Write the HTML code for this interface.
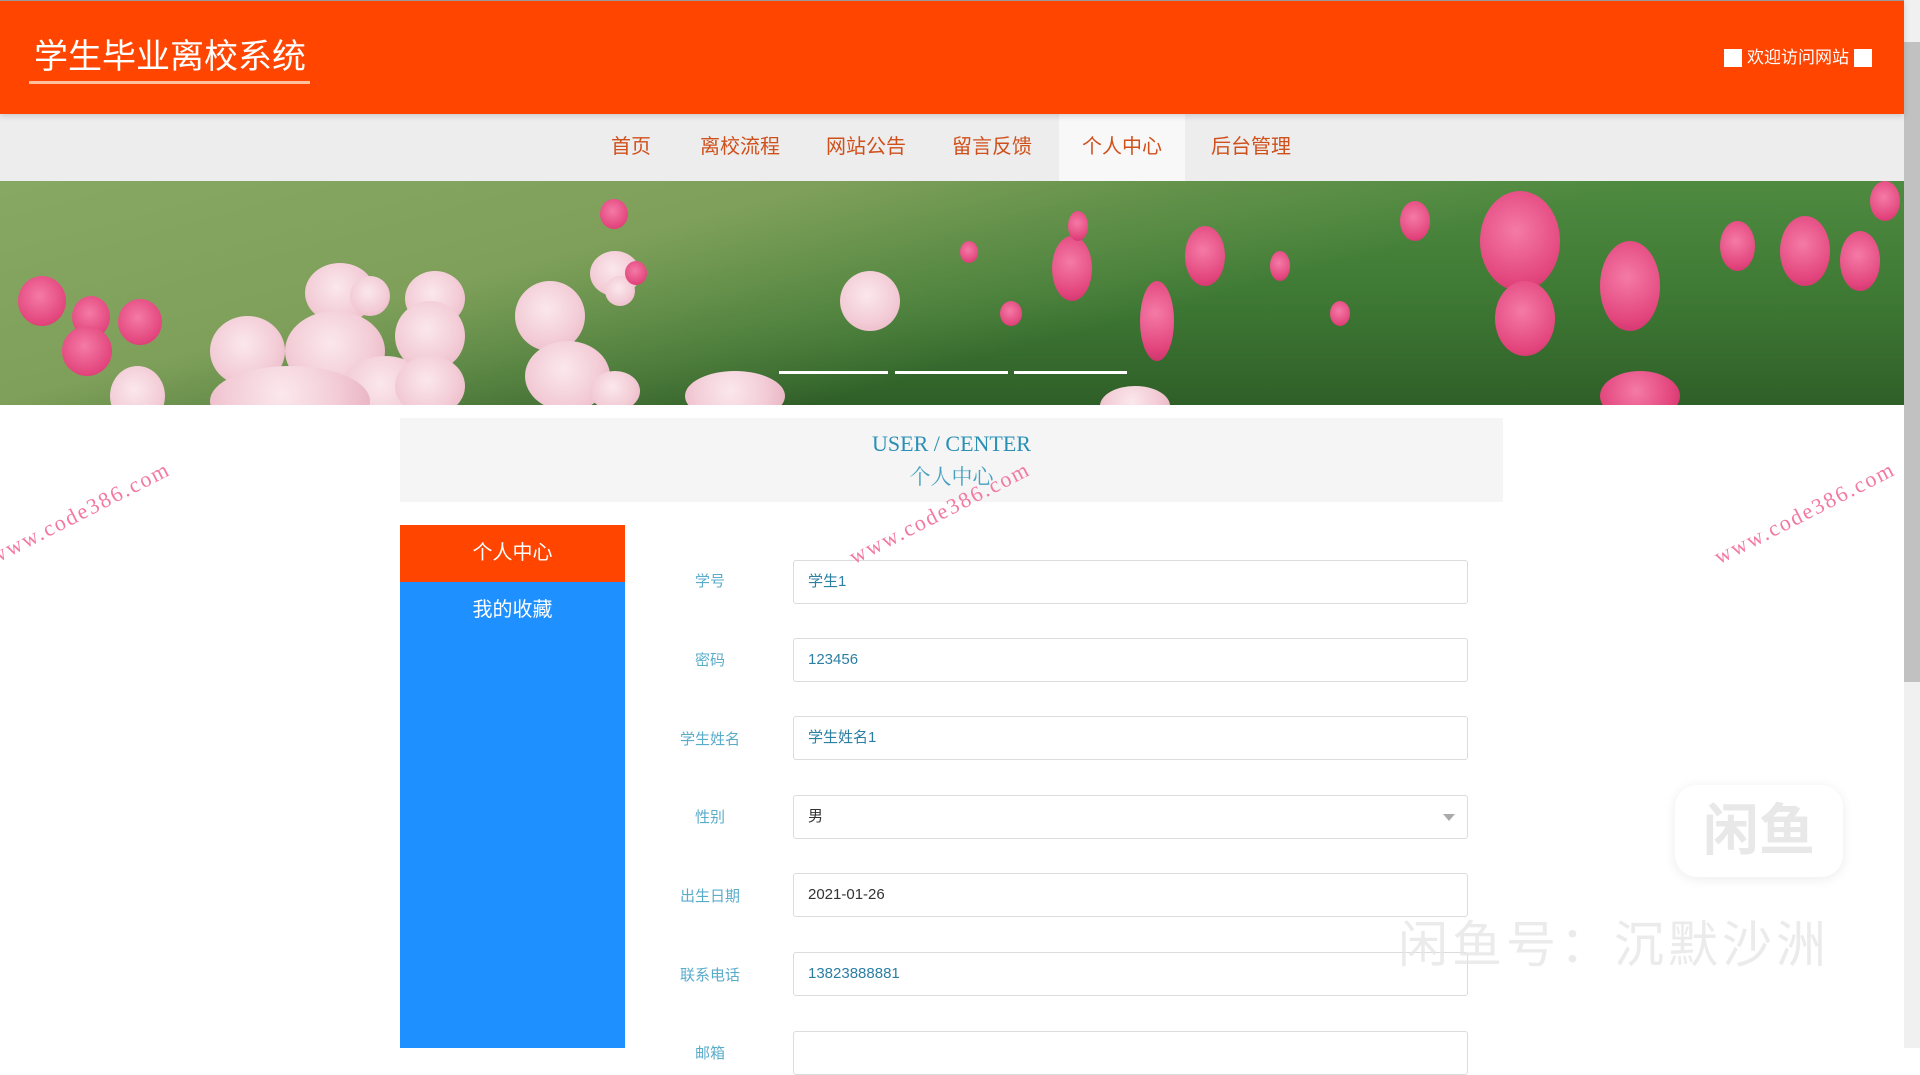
<!DOCTYPE html>
<html><head><meta charset="utf-8">
<style>
*{margin:0;padding:0;box-sizing:border-box}
body{width:1920px;height:1048px;overflow:hidden;background:#fff;font-family:"Liberation Sans","Noto Sans CJK SC",sans-serif;position:relative}
.hdr{position:absolute;left:0;top:0;width:1904px;height:114px;background:#ff4500;border-top:1px solid #999;box-shadow:0 2px 6px rgba(0,0,0,.15);z-index:2}
.title{position:absolute;left:34px;top:36px;font-size:34px;color:#fff;line-height:40px}
.uline{position:absolute;left:29px;top:80px;width:281px;height:3px;background:#ffc0a0}
.welcome{position:absolute;left:1724px;top:46px;font-size:17px;color:#fff;line-height:22px;display:flex;align-items:center;gap:5px}
.sq{width:18px;height:18px;background:#fff;display:inline-block}
.nav{position:absolute;left:0;top:114px;width:1904px;height:67px;background:#ededed}
.nav span{position:absolute;top:0;height:67px;line-height:67px;font-size:20px;color:#d0501c;transform:translateX(-50%)}
.nav .act{background:#f8f8f8;width:126px;text-align:center}
.banner{position:absolute;left:0;top:181px;width:1904px;height:224px;overflow:hidden;
background:
linear-gradient(165deg,#86a862 0%,#7fa05a 30%,rgba(110,150,80,.6) 45%,transparent 60%),
linear-gradient(180deg,#4f8a40 0%,#3f7a35 50%,#2f5f28 100%)}
.banner i{position:absolute;border-radius:50%;display:block}
.p{background:radial-gradient(circle at 45% 40%,#fbe8ec 0%,#f3cdd7 55%,#e7b0c0 100%)}
.h{background:radial-gradient(circle at 45% 40%,#f47aa6 0%,#e2447c 70%,#c8306a 100%)}
.dot{position:absolute;top:190px;height:3px;background:#fff}
.ubox{position:absolute;left:400px;top:418px;width:1103px;height:84px;background:#f5f5f5;text-align:center;font-family:"Liberation Serif","Noto Serif CJK SC",serif;color:#2a8fb5}
.ubox .a{position:absolute;top:13px;left:0;right:0;font-size:22px}
.ubox .b{position:absolute;top:43px;left:0;right:0;font-size:21px;color:#45a0c0}
.side{position:absolute;left:400px;top:525px;width:225px;height:523px;background:#1e90ff}
.side div{height:57px;line-height:57px;text-align:center;color:#fff;font-size:20px}
.side .on{background:#ff4500}
.lbl{position:absolute;left:660px;width:100px;text-align:center;font-size:15px;color:#5aaccb}
.inp{position:absolute;left:793px;width:675px;height:44px;border:1px solid #dcdcdc;border-radius:3px;background:#fff;font-size:15px;color:#2b7fa3;padding-left:14px;line-height:42px}
.wm{position:absolute;color:#f27aa2;font-family:"Liberation Serif",serif;font-size:22px;transform:rotate(-27deg);letter-spacing:2px;white-space:nowrap;z-index:3}
.sb{position:absolute;left:1904px;top:0;width:16px;height:1048px;background:#f0f0f0}
.th{position:absolute;left:1904px;top:42px;width:16px;height:640px;background:#c1c1c1}
</style></head><body>
<div class="hdr">
<div class="title">学生毕业离校系统</div><div class="uline"></div>
<div class="welcome"><span class="sq"></span>欢迎访问网站<span class="sq"></span></div>
</div>
<div class="nav">
<span style="left:631px">首页</span>
<span style="left:740px">离校流程</span>
<span style="left:866px">网站公告</span>
<span style="left:992px">留言反馈</span>
<span class="act" style="left:1122px">个人中心</span>
<span style="left:1251px">后台管理</span>
</div>
<div class="banner">
<i class="h" style="left:18px;top:95px;width:48px;height:50px"></i>
<i class="h" style="left:72px;top:115px;width:38px;height:42px"></i>
<i class="h" style="left:118px;top:118px;width:44px;height:46px"></i>
<i class="h" style="left:62px;top:145px;width:50px;height:50px"></i>
<i class="h" style="left:600px;top:18px;width:28px;height:30px"></i>
<i class="p" style="left:305px;top:82px;width:70px;height:60px"></i>
<i class="p" style="left:350px;top:95px;width:40px;height:40px"></i>
<i class="p" style="left:405px;top:90px;width:60px;height:55px"></i>
<i class="p" style="left:210px;top:135px;width:75px;height:70px"></i>
<i class="p" style="left:285px;top:130px;width:100px;height:80px"></i>
<i class="p" style="left:340px;top:175px;width:90px;height:70px"></i>
<i class="p" style="left:110px;top:185px;width:55px;height:60px"></i>
<i class="p" style="left:210px;top:185px;width:160px;height:70px"></i>
<i class="p" style="left:395px;top:120px;width:70px;height:70px"></i>
<i class="p" style="left:395px;top:175px;width:70px;height:60px"></i>
<i class="p" style="left:515px;top:100px;width:70px;height:70px"></i>
<i class="p" style="left:525px;top:160px;width:85px;height:70px"></i>
<i class="p" style="left:590px;top:190px;width:50px;height:40px"></i>
<i class="p" style="left:685px;top:190px;width:100px;height:50px"></i>
<i class="p" style="left:590px;top:70px;width:50px;height:45px"></i>
<i class="p" style="left:605px;top:95px;width:30px;height:30px"></i>
<i class="h" style="left:625px;top:80px;width:22px;height:24px"></i>
<i class="p" style="left:840px;top:90px;width:60px;height:60px"></i>
<i class="h" style="left:1052px;top:55px;width:40px;height:65px"></i>
<i class="h" style="left:1140px;top:100px;width:34px;height:80px"></i>
<i class="h" style="left:1185px;top:45px;width:40px;height:60px"></i>
<i class="h" style="left:1068px;top:30px;width:20px;height:30px"></i>
<i class="h" style="left:1480px;top:10px;width:80px;height:100px"></i>
<i class="h" style="left:1495px;top:100px;width:60px;height:75px"></i>
<i class="h" style="left:1600px;top:60px;width:60px;height:90px"></i>
<i class="h" style="left:1780px;top:35px;width:50px;height:70px"></i>
<i class="h" style="left:1840px;top:50px;width:40px;height:60px"></i>
<i class="h" style="left:1870px;top:0px;width:30px;height:40px"></i>
<i class="h" style="left:1720px;top:40px;width:35px;height:50px"></i>
<i class="h" style="left:1400px;top:20px;width:30px;height:40px"></i>
<i class="h" style="left:1600px;top:190px;width:80px;height:50px"></i>
<i class="p" style="left:1100px;top:205px;width:70px;height:40px"></i>
<i class="h" style="left:1270px;top:70px;width:20px;height:30px"></i>
<i class="h" style="left:1330px;top:120px;width:20px;height:25px"></i>
<i class="h" style="left:960px;top:60px;width:18px;height:22px"></i>
<i class="h" style="left:1000px;top:120px;width:22px;height:25px"></i>
<div class="dot" style="left:779px;width:109px"></div>
<div class="dot" style="left:895px;width:113px"></div>
<div class="dot" style="left:1014px;width:113px"></div>
</div>
<div class="ubox"><div class="a">USER / CENTER</div><div class="b">个人中心</div></div>
<div class="side"><div class="on">个人中心</div><div>我的收藏</div></div>

<div class="lbl" style="top:570px">学号</div><div class="inp" style="top:560px">学生1</div>
<div class="lbl" style="top:649px">密码</div><div class="inp" style="top:638px">123456</div>
<div class="lbl" style="top:728px">学生姓名</div><div class="inp" style="top:716px">学生姓名1</div>
<div class="lbl" style="top:806px">性别</div><div class="inp" style="top:795px;color:#333">男<span style="position:absolute;right:12px;top:18px;border:6px solid transparent;border-top:7px solid #aaa;border-bottom:0"></span></div>
<div class="lbl" style="top:885px">出生日期</div><div class="inp" style="top:873px;color:#333">2021-01-26</div>
<div class="lbl" style="top:964px">联系电话</div><div class="inp" style="top:952px">13823888881</div>
<div class="lbl" style="top:1042px">邮箱</div><div class="inp" style="top:1031px"></div>

<div class="wm" style="left:-20px;top:500px">www.code386.com</div>
<div class="wm" style="left:840px;top:500px">www.code386.com</div>
<div class="wm" style="left:1705px;top:500px">www.code386.com</div>
<div style="position:absolute;left:1675px;top:785px;width:168px;height:92px;border-radius:22px;background:#fff;box-shadow:0 2px 12px rgba(0,0,0,.08);font-size:56px;color:#e8e8e8;text-align:center;line-height:92px;font-weight:bold">闲鱼</div>
<div style="position:absolute;left:1398px;top:905px;font-size:50px;color:rgba(230,230,230,.8);letter-spacing:4px;white-space:nowrap">闲鱼号：沉默沙洲</div>
<div class="sb"></div><div class="th"></div>
</body></html>
